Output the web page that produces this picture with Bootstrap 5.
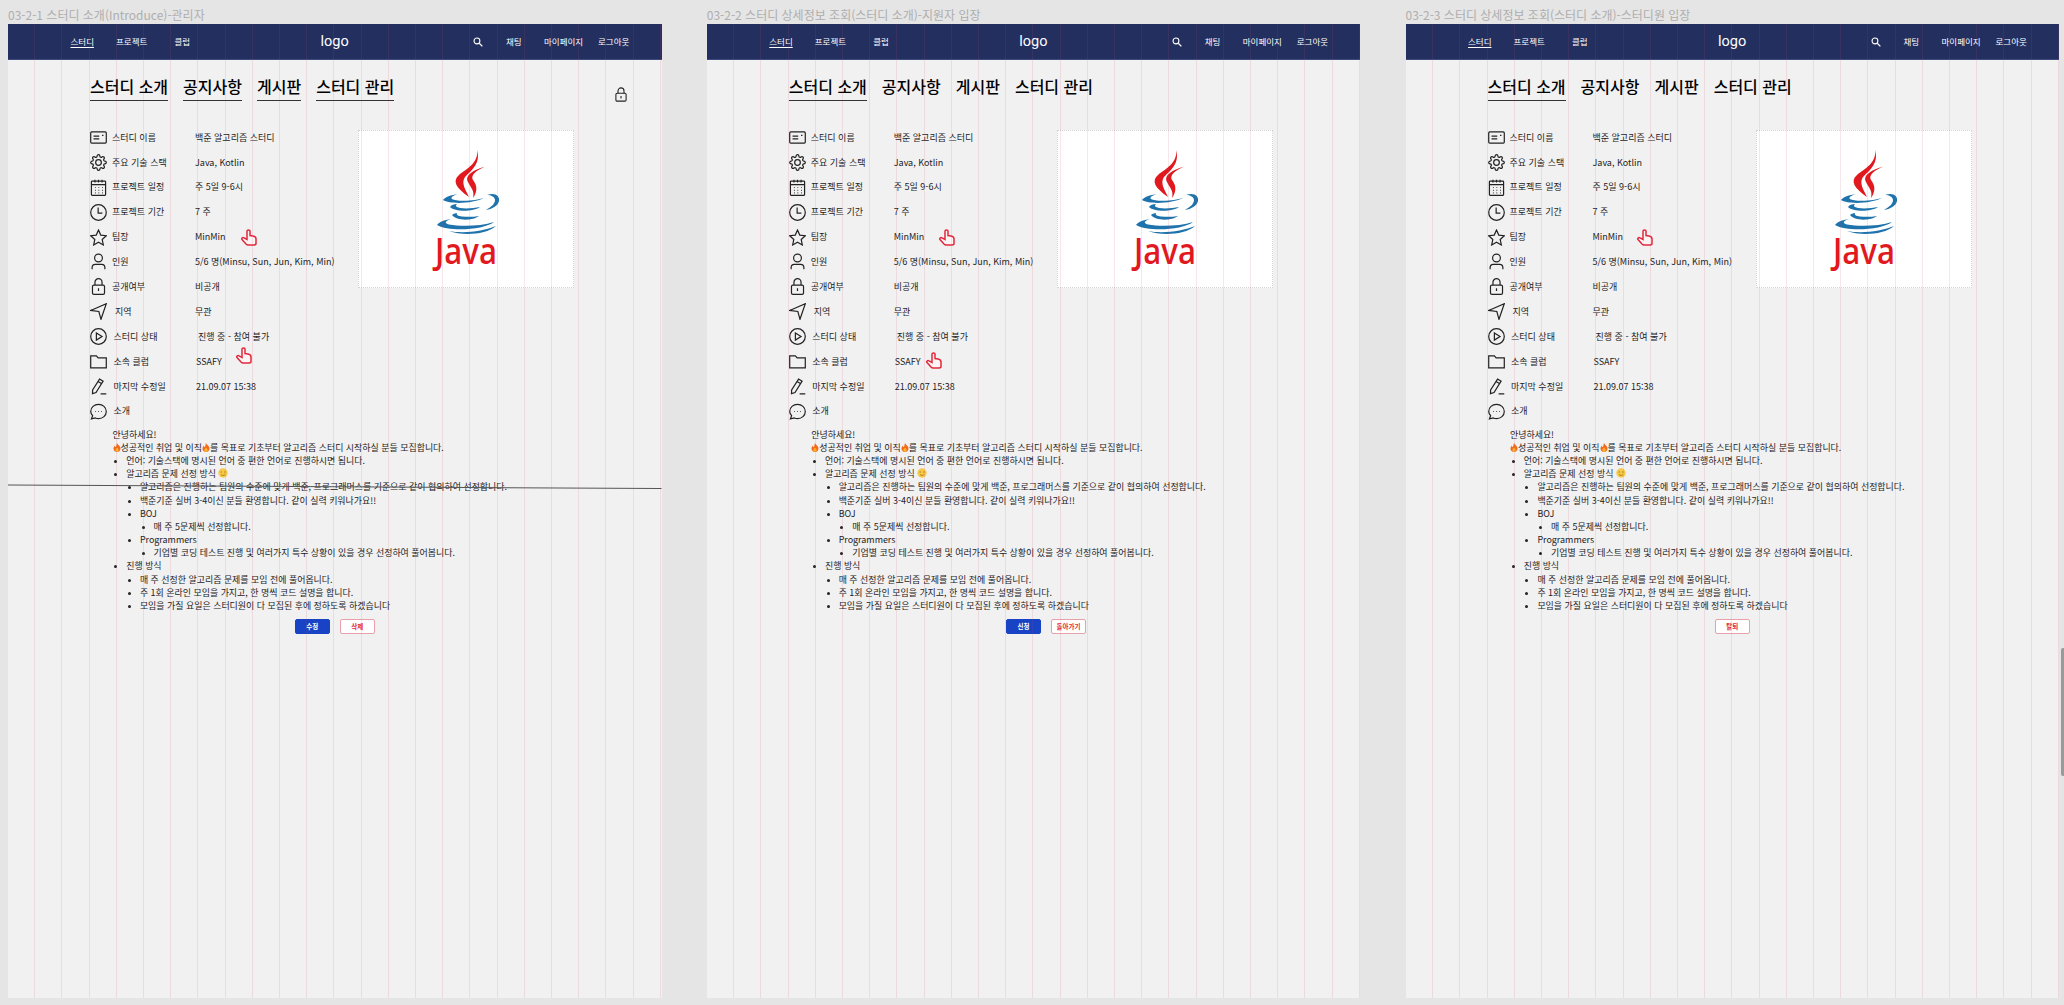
<!doctype html>
<html lang="ko">
<head>
  <meta charset="UTF-8">
  <title>스터디 소개</title>
  <link href="https://cdn.jsdelivr.net/npm/bootstrap@5.3.0/dist/css/bootstrap.min.css" rel="stylesheet">
  <style>
    html, body { height:100%; overflow:hidden; }
    body { background:#e5e5e5; font-family:"Noto Sans CJK KR","Noto Sans",sans-serif; color:#222; font-size:9px; }
    .canvas { gap:45.25px; padding-left:8px; }
    .frame-wrap { width:653.5px; }
    .frame-title { height:24px; line-height:29px; font-size:12px; color:#aeaeae; white-space:nowrap; }
    .frame { height:974px; background:#f2f1f2; }
    .frame::after { content:""; position:absolute; inset:0; pointer-events:none;
      background:repeating-linear-gradient(90deg, transparent 0, transparent 26.2px, rgba(190,70,95,.13) 26.2px, rgba(190,70,95,.13) 27.2px); }
    .top-bar { display:grid; grid-template-columns:45.5px 58.5px 146px 152.5px 33px 38px 54px auto; align-items:center;
      height:36px; padding-left:62.5px; background:#232f5f; color:#fff; font-size:8.5px; border-bottom:1px solid #3d4a7d; }
    .search-ico { width:10px; height:10px; }
    .brand { font-family:Roboto,sans-serif; font-size:14.5px; }
    .current { text-decoration:underline; text-underline-offset:2px; }
    .tabs { padding:15px 35px 0 82px; gap:15px; font-size:16px; height:65px; }
    .tab-item { line-height:22px; height:26px; color:#000; font-weight:500; border-bottom:1.5px solid transparent; white-space:nowrap; }
    .tab-on { border-bottom-color:#333; }
    .lock-top { width:12px; height:15px; margin-top:12px; margin-left:auto; fill:none; stroke:#222; stroke-width:1.8; }
    .info { padding-left:82px; width:350px; flex:none; }
    .info-row { height:24.9px; }
    .info-icon { width:22px; flex:none; }
    .info-icon svg { display:block; width:17px; height:17px; fill:none; stroke:#222; stroke-width:1.7; }
    .info-label { width:83px; flex:none; }
    .shift-l { margin-left:1.5px; margin-right:-1.5px; }
    .shift-l2 { padding-left:1.5px; }
    .shift-v { margin-left:1px; }
    .shift-v2 { margin-left:3px; }
    .pointer { position:absolute; width:16px; height:17px; fill:#fff4f4; stroke:#e0283c; stroke-width:1.5; }
    .hand-top { left:151px; top:4.5px; }
    .hand-club { left:146px; top:-2px; }
    .hand-top-b { left:150px; top:4.5px; }
    .hand-club-b { left:137px; top:3px; }
    .hand-top-c { left:149px; top:4.5px; }
    .java-box { width:216px; height:158px; margin-top:4.5px; flex:none; background:#fff; border:1px dotted #d4d4d4; }
    .java-word { font-family:"Open Sans",sans-serif; font-weight:600; font-size:36px; fill:#e1191f; }
    .intro { padding-left:104.5px; line-height:13.17px; margin-top:4px; font-size:8.95px; }
    .intro ul { margin:0; padding-left:13.7px; list-style:disc; }
    .intro li::marker { font-size:7px; }
    .ico-in { width:8px; height:9px; vertical-align:-1px; }
    .ico-face { width:10px; height:10px; vertical-align:-1px; }
    .btns { gap:10px; margin-top:7px; }
    .btns-off { padding-left:25px; }
    .btn-mini { width:35px; height:15px; padding:0; font-size:6.5px; line-height:13px; border-radius:2px; font-weight:700; }
    .btn-fill { background:#1843c4; border:1px solid #1843c4; color:#fff; }
    .btn-line { background:#fff; border:1px solid #e8a0aa; color:#e0283c; }
    .slash { position:absolute; left:0; top:458px; width:653.5px; height:8px; }
    .thumb { position:absolute; right:0; top:648px; width:3px; height:128px; background:#9a9a9a; border-radius:2px 0 0 2px; }
  </style>
</head>
<body class="position-relative">

  <svg width="0" height="0" class="position-absolute">
    <symbol id="i-card" viewBox="0 0 24 24"><rect x="1" y="4" width="22" height="16" rx="1.5"/><path d="M5 10h8M5 14h8M17 9h2"/></symbol>
    <symbol id="i-gear" viewBox="0 0 24 24"><circle cx="12" cy="12" r="4"/><path d="M19.4 15a1.65 1.65 0 0 0 .33 1.82l.06.06a2 2 0 0 1 0 2.83 2 2 0 0 1-2.83 0l-.06-.06a1.65 1.65 0 0 0-1.82-.33 1.65 1.65 0 0 0-1 1.51V21a2 2 0 0 1-2 2 2 2 0 0 1-2-2v-.09A1.65 1.65 0 0 0 9 19.4a1.65 1.65 0 0 0-1.82.33l-.06.06a2 2 0 0 1-2.83 0 2 2 0 0 1 0-2.83l.06-.06a1.65 1.65 0 0 0 .33-1.82 1.65 1.65 0 0 0-1.51-1H3a2 2 0 0 1-2-2 2 2 0 0 1 2-2h.09A1.65 1.65 0 0 0 4.6 9a1.65 1.65 0 0 0-.33-1.82l-.06-.06a2 2 0 0 1 0-2.83 2 2 0 0 1 2.83 0l.06.06a1.65 1.65 0 0 0 1.82.33H9a1.65 1.65 0 0 0 1-1.51V3a2 2 0 0 1 2-2 2 2 0 0 1 2 2v.09a1.65 1.65 0 0 0 1 1.51 1.65 1.65 0 0 0 1.82-.33l.06-.06a2 2 0 0 1 2.83 0 2 2 0 0 1 0 2.83l-.06.06a1.65 1.65 0 0 0-.33 1.82V9a1.65 1.65 0 0 0 1.51 1H21a2 2 0 0 1 2 2 2 2 0 0 1-2 2h-.09a1.65 1.65 0 0 0-1.51 1z"/></symbol>
    <symbol id="i-cal" viewBox="0 0 24 24"><rect x="2" y="3" width="20" height="20" rx="1"/><path d="M2 8h20M7 1v4M12 1v4M17 1v4M7 12h1M12 12h1M17 12h1M7 16h1M12 16h1M17 16h1M7 19.5h1M12 19.5h1M17 19.5h1"/></symbol>
    <symbol id="i-clock" viewBox="0 0 24 24"><circle cx="12" cy="12" r="11"/><path d="M11.5 5v8h6"/></symbol>
    <symbol id="i-star" viewBox="0 0 24 24"><polygon points="12 1.5 15.2 8.6 23 9.5 17.2 14.8 18.8 22.5 12 18.6 5.2 22.5 6.8 14.8 1 9.5 8.8 8.6"/></symbol>
    <symbol id="i-user" viewBox="0 0 24 24"><circle cx="12" cy="7" r="5.5"/><path d="M3 23v-2.5a4.5 4.5 0 0 1 4.5-4.5h9a4.5 4.5 0 0 1 4.5 4.5V23"/></symbol>
    <symbol id="i-lock" viewBox="0 0 20 24"><rect x="1.500" y="10" width="17" height="13" rx="2"/><path d="M5 10V6a5 5 0 0 1 10 0V10M10 14.500v4"/></symbol>
    <symbol id="i-nav" viewBox="0 0 24 24"><polygon points="1 10.5 23 1 15.5 23 12.5 12"/></symbol>
    <symbol id="i-play" viewBox="0 0 24 24"><circle cx="12" cy="12" r="11"/><polygon points="9 7 17 12 9 17"/></symbol>
    <symbol id="i-folder" viewBox="0 0 24 24"><path d="M1 4h8l2.5 3H23v14H1z"/></symbol>
    <symbol id="i-pen" viewBox="0 0 24 24"><path d="M13.5 1.5l5 3-10 16-5 1.5.2-5zM11.500 5l5 3M15 22.500h8"/></symbol>
    <symbol id="i-chat" viewBox="0 0 24 24"><path d="M12 2c6 0 11 4.200 11 10s-5 10-11 10c-1.700 0-3-.3-4.500-.9L2 22.500l1.700-4.600C2 16 1 14.200 1 12 1 6.200 6 2 12 2z"/><path d="M7.500 12h1M11.500 12h1M15.500 12h1"/></symbol>
    <symbol id="i-hand" viewBox="0 0 16 17"><path d="M6 2C6 .6 9 .6 9 2L9 6.500 12 7C14 7.300 15 8.500 15 10L15 14.500C15 15.500 14 16 13 16L7 16C6 16 5.500 15.500 5 15L1 10.500C.3 9.500 1.500 8 3 8.800L6 10.500Z"/></symbol>
    <symbol id="i-fire" viewBox="0 0 8 9"><path d="M4 0c.5 1.500 3.500 3 3.500 5.500C7.500 7.500 6 9 4 9S.5 7.500.5 5.500C.5 4 1.500 3 2 2.500c0 1 .5 1.500 1 1.500C3.500 3 3.500 1 4 0z" fill="#f26a1b"/><path d="M4 4.500c.8.800 1.600 1.500 1.600 2.500S5 8.800 4 8.800 2.400 8 2.400 7 3.500 5.500 4 4.500z" fill="#fbb531"/></symbol>
    <symbol id="i-smile" viewBox="0 0 10 10"><circle cx="5" cy="5" r="4.700" fill="#f7c948"/><path d="M2.500 4h1.500M6 4h1.500M3 6.500c1 1.200 3 1.200 4 0" fill="none" stroke="#8a6414" stroke-width=".7"/></symbol>
    <symbol id="i-search" viewBox="0 0 24 24"><circle cx="9.500" cy="9.500" r="7" fill="none" stroke="#fff" stroke-width="2.600"/><path d="M15 15l7.500 7.500" stroke="#fff" stroke-width="3"/></symbol>
    <symbol id="i-java" viewBox="0 0 216 157">
      <path fill="#e1191f" d="M118 19C120 32 107 38 100 44C93 50 97 57 110 66C106 58 102 52 106 46C113 39 122 32 118 19Z"/>
      <path fill="#e1191f" d="M126 35.700C116 38 105 44 109 51C111 56 116 59 114 67C119 60 118 54 114 49C111 44 118 39 126 35.700Z"/>
      <g fill="#1e73ad">
        <path d="M84 69C86 66 92 64 99 63C92 65 90 68 96 69C106 71 118 69 125 67C116 72 92 74 84 69Z"/>
        <path d="M128 64C136 61 141 65 140 70C139 75 133 78 127 79C132 76 136 73 136 69C136 66 132 64 128 64Z"/>
        <path d="M91 76C92 74 95 73 98 73C96 75 97 76 101 77C108 78 115 77 121 76C114 81 96 81 91 76Z"/>
        <path d="M93 84C94 83 96 82 98 82C97 84 99 85 103 85.500C109 86 114 86 120 85C114 90 97 90 93 84Z"/>
        <path d="M78 94C80 91 85 89 92 88C86 90 85 92 90 93.500C103 96 122 95 135 91C125 99 90 101 78 94Z"/>
        <path d="M90 100C105 103 125 100 137 95C127 104 103 105 90 100Z"/>
      </g>
    </symbol>
  </svg>

  <div class="canvas d-flex">

    <!-- 03-2-1 -->
    <div class="frame-wrap">
      <div class="frame-title">03-2-1 스터디 소개(Introduce)-관리자</div>
      <div class="frame position-relative">
        <div class="top-bar">
          <span class="current">스터디</span>
          <span>프로젝트</span>
          <span>클럽</span>
          <span class="brand">logo</span>
          <svg class="search-ico"><use href="#i-search"/></svg>
          <span>채팅</span>
          <span>마이페이지</span>
          <span>로그아웃</span>
        </div>
        <div class="tabs d-flex align-items-start">
          <div class="tab-item tab-on">스터디 소개</div>
          <div class="tab-item tab-on">공지사항</div>
          <div class="tab-item tab-on">게시판</div>
          <div class="tab-item tab-on">스터디 관리</div>
          <svg class="lock-top"><use href="#i-lock"/></svg>
        </div>
        <div class="d-flex">
          <div class="info">
            <div class="info-row d-flex align-items-center"><div class="info-icon"><svg><use href="#i-card"/></svg></div><div class="info-label">스터디 이름</div><div>백준 알고리즘 스터디</div></div>
            <div class="info-row d-flex align-items-center"><div class="info-icon"><svg><use href="#i-gear"/></svg></div><div class="info-label">주요 기술 스택</div><div>Java, Kotlin</div></div>
            <div class="info-row d-flex align-items-center"><div class="info-icon"><svg><use href="#i-cal"/></svg></div><div class="info-label">프로젝트 일정</div><div>주 5일 9-6시</div></div>
            <div class="info-row d-flex align-items-center"><div class="info-icon"><svg><use href="#i-clock"/></svg></div><div class="info-label">프로젝트 기간</div><div>7 주</div></div>
            <div class="info-row d-flex align-items-center position-relative"><div class="info-icon"><svg><use href="#i-star"/></svg></div><div class="info-label">팀장</div><div>MinMin</div><svg class="pointer hand-top"><use href="#i-hand"/></svg></div>
            <div class="info-row d-flex align-items-center"><div class="info-icon"><svg><use href="#i-user"/></svg></div><div class="info-label">인원</div><div>5/6 명(Minsu, Sun, Jun, Kim, Min)</div></div>
            <div class="info-row d-flex align-items-center"><div class="info-icon"><svg><use href="#i-lock"/></svg></div><div class="info-label">공개여부</div><div>비공개</div></div>
            <div class="info-row d-flex align-items-center"><div class="info-icon"><svg><use href="#i-nav"/></svg></div><div class="info-label shift-l shift-l2">지역</div><div>무관</div></div>
            <div class="info-row d-flex align-items-center"><div class="info-icon"><svg><use href="#i-play"/></svg></div><div class="info-label shift-l">스터디 상태</div><div class="shift-v2">진행 중 - 참여 불가</div></div>
            <div class="info-row d-flex align-items-center position-relative"><div class="info-icon"><svg><use href="#i-folder"/></svg></div><div class="info-label shift-l">소속 클럽</div><div class="shift-v">SSAFY</div><svg class="pointer hand-club"><use href="#i-hand"/></svg></div>
            <div class="info-row d-flex align-items-center"><div class="info-icon"><svg><use href="#i-pen"/></svg></div><div class="info-label shift-l">마지막 수정일</div><div class="shift-v">21.09.07 15:38</div></div>
            <div class="info-row d-flex align-items-center"><div class="info-icon"><svg><use href="#i-chat"/></svg></div><div class="info-label shift-l">소개</div></div>
          </div>
          <div class="java-box"><svg width="216" height="157"><use href="#i-java"/><text class="java-word" x="76" y="133" textLength="62" lengthAdjust="spacingAndGlyphs">Java</text></svg></div>
        </div>
        <div class="intro">
          <div>안녕하세요!</div>
          <div><svg class="ico-in"><use href="#i-fire"/></svg>성공적인 취업 및 이직<svg class="ico-in"><use href="#i-fire"/></svg>를 목표로 기초부터 알고리즘 스터디 시작하실 분들 모집합니다.</div>
          <ul>
            <li>언어: 기술스택에 명시된 언어 중 편한 언어로 진행하시면 됩니다.</li>
            <li>알고리즘 문제 선정 방식 <svg class="ico-face"><use href="#i-smile"/></svg>
              <ul>
                <li>알고리즘은 진행하는 팀원의 수준에 맞게 백준, 프로그래머스를 기준으로 같이 협의하여 선정합니다.</li>
                <li>백준기준 실버 3-4이신 분들 환영합니다. 같이 실력 키워나가요!!</li>
                <li>BOJ<ul><li>매 주 5문제씩 선정합니다.</li></ul></li>
                <li>Programmers<ul><li>기업별 코딩 테스트 진행 및 여러가지 특수 상황이 있을 경우 선정하여 풀어봅니다.</li></ul></li>
              </ul>
            </li>
            <li>진행 방식
              <ul>
                <li>매 주 선정한 알고리즘 문제를 모임 전에 풀어옵니다.</li>
                <li>주 1회 온라인 모임을 가지고, 한 명씩 코드 설명을 합니다.</li>
                <li>모임을 가질 요일은 스터디원이 다 모집된 후에 정하도록 하겠습니다</li>
              </ul>
            </li>
          </ul>
        </div>
        <div class="btns d-flex justify-content-center">
          <button class="btn btn-mini btn-fill">수정</button>
          <button class="btn btn-mini btn-line">삭제</button>
        </div>
        <svg class="slash" viewBox="0 0 653 8" preserveAspectRatio="none"><line x1="0" y1="3" x2="653" y2="6.500" stroke="#555" stroke-width="1"/></svg>
      </div>
    </div>

    <!-- 03-2-2 -->
    <div class="frame-wrap">
      <div class="frame-title">03-2-2 스터디 상세정보 조회(스터디 소개)-지원자 입장</div>
      <div class="frame position-relative">
        <div class="top-bar">
          <span class="current">스터디</span>
          <span>프로젝트</span>
          <span>클럽</span>
          <span class="brand">logo</span>
          <svg class="search-ico"><use href="#i-search"/></svg>
          <span>채팅</span>
          <span>마이페이지</span>
          <span>로그아웃</span>
        </div>
        <div class="tabs d-flex align-items-start">
          <div class="tab-item tab-on">스터디 소개</div>
          <div class="tab-item">공지사항</div>
          <div class="tab-item">게시판</div>
          <div class="tab-item">스터디 관리</div>
        </div>
        <div class="d-flex">
          <div class="info">
            <div class="info-row d-flex align-items-center"><div class="info-icon"><svg><use href="#i-card"/></svg></div><div class="info-label">스터디 이름</div><div>백준 알고리즘 스터디</div></div>
            <div class="info-row d-flex align-items-center"><div class="info-icon"><svg><use href="#i-gear"/></svg></div><div class="info-label">주요 기술 스택</div><div>Java, Kotlin</div></div>
            <div class="info-row d-flex align-items-center"><div class="info-icon"><svg><use href="#i-cal"/></svg></div><div class="info-label">프로젝트 일정</div><div>주 5일 9-6시</div></div>
            <div class="info-row d-flex align-items-center"><div class="info-icon"><svg><use href="#i-clock"/></svg></div><div class="info-label">프로젝트 기간</div><div>7 주</div></div>
            <div class="info-row d-flex align-items-center position-relative"><div class="info-icon"><svg><use href="#i-star"/></svg></div><div class="info-label">팀장</div><div>MinMin</div><svg class="pointer hand-top-b"><use href="#i-hand"/></svg></div>
            <div class="info-row d-flex align-items-center"><div class="info-icon"><svg><use href="#i-user"/></svg></div><div class="info-label">인원</div><div>5/6 명(Minsu, Sun, Jun, Kim, Min)</div></div>
            <div class="info-row d-flex align-items-center"><div class="info-icon"><svg><use href="#i-lock"/></svg></div><div class="info-label">공개여부</div><div>비공개</div></div>
            <div class="info-row d-flex align-items-center"><div class="info-icon"><svg><use href="#i-nav"/></svg></div><div class="info-label shift-l shift-l2">지역</div><div>무관</div></div>
            <div class="info-row d-flex align-items-center"><div class="info-icon"><svg><use href="#i-play"/></svg></div><div class="info-label shift-l">스터디 상태</div><div class="shift-v2">진행 중 - 참여 불가</div></div>
            <div class="info-row d-flex align-items-center position-relative"><div class="info-icon"><svg><use href="#i-folder"/></svg></div><div class="info-label shift-l">소속 클럽</div><div class="shift-v">SSAFY</div><svg class="pointer hand-club-b"><use href="#i-hand"/></svg></div>
            <div class="info-row d-flex align-items-center"><div class="info-icon"><svg><use href="#i-pen"/></svg></div><div class="info-label shift-l">마지막 수정일</div><div class="shift-v">21.09.07 15:38</div></div>
            <div class="info-row d-flex align-items-center"><div class="info-icon"><svg><use href="#i-chat"/></svg></div><div class="info-label shift-l">소개</div></div>
          </div>
          <div class="java-box"><svg width="216" height="157"><use href="#i-java"/><text class="java-word" x="76" y="133" textLength="62" lengthAdjust="spacingAndGlyphs">Java</text></svg></div>
        </div>
        <div class="intro">
          <div>안녕하세요!</div>
          <div><svg class="ico-in"><use href="#i-fire"/></svg>성공적인 취업 및 이직<svg class="ico-in"><use href="#i-fire"/></svg>를 목표로 기초부터 알고리즘 스터디 시작하실 분들 모집합니다.</div>
          <ul>
            <li>언어: 기술스택에 명시된 언어 중 편한 언어로 진행하시면 됩니다.</li>
            <li>알고리즘 문제 선정 방식 <svg class="ico-face"><use href="#i-smile"/></svg>
              <ul>
                <li>알고리즘은 진행하는 팀원의 수준에 맞게 백준, 프로그래머스를 기준으로 같이 협의하여 선정합니다.</li>
                <li>백준기준 실버 3-4이신 분들 환영합니다. 같이 실력 키워나가요!!</li>
                <li>BOJ<ul><li>매 주 5문제씩 선정합니다.</li></ul></li>
                <li>Programmers<ul><li>기업별 코딩 테스트 진행 및 여러가지 특수 상황이 있을 경우 선정하여 풀어봅니다.</li></ul></li>
              </ul>
            </li>
            <li>진행 방식
              <ul>
                <li>매 주 선정한 알고리즘 문제를 모임 전에 풀어옵니다.</li>
                <li>주 1회 온라인 모임을 가지고, 한 명씩 코드 설명을 합니다.</li>
                <li>모임을 가질 요일은 스터디원이 다 모집된 후에 정하도록 하겠습니다</li>
              </ul>
            </li>
          </ul>
        </div>
        <div class="btns btns-off d-flex justify-content-center">
          <button class="btn btn-mini btn-fill">신청</button>
          <button class="btn btn-mini btn-line">돌아가기</button>
        </div>
      </div>
    </div>

    <!-- 03-2-3 -->
    <div class="frame-wrap">
      <div class="frame-title">03-2-3 스터디 상세정보 조회(스터디 소개)-스터디원 입장</div>
      <div class="frame position-relative">
        <div class="top-bar">
          <span class="current">스터디</span>
          <span>프로젝트</span>
          <span>클럽</span>
          <span class="brand">logo</span>
          <svg class="search-ico"><use href="#i-search"/></svg>
          <span>채팅</span>
          <span>마이페이지</span>
          <span>로그아웃</span>
        </div>
        <div class="tabs d-flex align-items-start">
          <div class="tab-item tab-on">스터디 소개</div>
          <div class="tab-item">공지사항</div>
          <div class="tab-item">게시판</div>
          <div class="tab-item">스터디 관리</div>
        </div>
        <div class="d-flex">
          <div class="info">
            <div class="info-row d-flex align-items-center"><div class="info-icon"><svg><use href="#i-card"/></svg></div><div class="info-label">스터디 이름</div><div>백준 알고리즘 스터디</div></div>
            <div class="info-row d-flex align-items-center"><div class="info-icon"><svg><use href="#i-gear"/></svg></div><div class="info-label">주요 기술 스택</div><div>Java, Kotlin</div></div>
            <div class="info-row d-flex align-items-center"><div class="info-icon"><svg><use href="#i-cal"/></svg></div><div class="info-label">프로젝트 일정</div><div>주 5일 9-6시</div></div>
            <div class="info-row d-flex align-items-center"><div class="info-icon"><svg><use href="#i-clock"/></svg></div><div class="info-label">프로젝트 기간</div><div>7 주</div></div>
            <div class="info-row d-flex align-items-center position-relative"><div class="info-icon"><svg><use href="#i-star"/></svg></div><div class="info-label">팀장</div><div>MinMin</div><svg class="pointer hand-top-c"><use href="#i-hand"/></svg></div>
            <div class="info-row d-flex align-items-center"><div class="info-icon"><svg><use href="#i-user"/></svg></div><div class="info-label">인원</div><div>5/6 명(Minsu, Sun, Jun, Kim, Min)</div></div>
            <div class="info-row d-flex align-items-center"><div class="info-icon"><svg><use href="#i-lock"/></svg></div><div class="info-label">공개여부</div><div>비공개</div></div>
            <div class="info-row d-flex align-items-center"><div class="info-icon"><svg><use href="#i-nav"/></svg></div><div class="info-label shift-l shift-l2">지역</div><div>무관</div></div>
            <div class="info-row d-flex align-items-center"><div class="info-icon"><svg><use href="#i-play"/></svg></div><div class="info-label shift-l">스터디 상태</div><div class="shift-v2">진행 중 - 참여 불가</div></div>
            <div class="info-row d-flex align-items-center"><div class="info-icon"><svg><use href="#i-folder"/></svg></div><div class="info-label shift-l">소속 클럽</div><div class="shift-v">SSAFY</div></div>
            <div class="info-row d-flex align-items-center"><div class="info-icon"><svg><use href="#i-pen"/></svg></div><div class="info-label shift-l">마지막 수정일</div><div class="shift-v">21.09.07 15:38</div></div>
            <div class="info-row d-flex align-items-center"><div class="info-icon"><svg><use href="#i-chat"/></svg></div><div class="info-label shift-l">소개</div></div>
          </div>
          <div class="java-box"><svg width="216" height="157"><use href="#i-java"/><text class="java-word" x="76" y="133" textLength="62" lengthAdjust="spacingAndGlyphs">Java</text></svg></div>
        </div>
        <div class="intro">
          <div>안녕하세요!</div>
          <div><svg class="ico-in"><use href="#i-fire"/></svg>성공적인 취업 및 이직<svg class="ico-in"><use href="#i-fire"/></svg>를 목표로 기초부터 알고리즘 스터디 시작하실 분들 모집합니다.</div>
          <ul>
            <li>언어: 기술스택에 명시된 언어 중 편한 언어로 진행하시면 됩니다.</li>
            <li>알고리즘 문제 선정 방식 <svg class="ico-face"><use href="#i-smile"/></svg>
              <ul>
                <li>알고리즘은 진행하는 팀원의 수준에 맞게 백준, 프로그래머스를 기준으로 같이 협의하여 선정합니다.</li>
                <li>백준기준 실버 3-4이신 분들 환영합니다. 같이 실력 키워나가요!!</li>
                <li>BOJ<ul><li>매 주 5문제씩 선정합니다.</li></ul></li>
                <li>Programmers<ul><li>기업별 코딩 테스트 진행 및 여러가지 특수 상황이 있을 경우 선정하여 풀어봅니다.</li></ul></li>
              </ul>
            </li>
            <li>진행 방식
              <ul>
                <li>매 주 선정한 알고리즘 문제를 모임 전에 풀어옵니다.</li>
                <li>주 1회 온라인 모임을 가지고, 한 명씩 코드 설명을 합니다.</li>
                <li>모임을 가질 요일은 스터디원이 다 모집된 후에 정하도록 하겠습니다</li>
              </ul>
            </li>
          </ul>
        </div>
        <div class="btns d-flex justify-content-center">
          <button class="btn btn-mini btn-line">탈퇴</button>
        </div>
      </div>
    </div>

  </div>
  <div class="thumb"></div>
  <script src="https://cdn.jsdelivr.net/npm/bootstrap@5.3.0/dist/js/bootstrap.bundle.min.js"></script>
</body>
</html>
